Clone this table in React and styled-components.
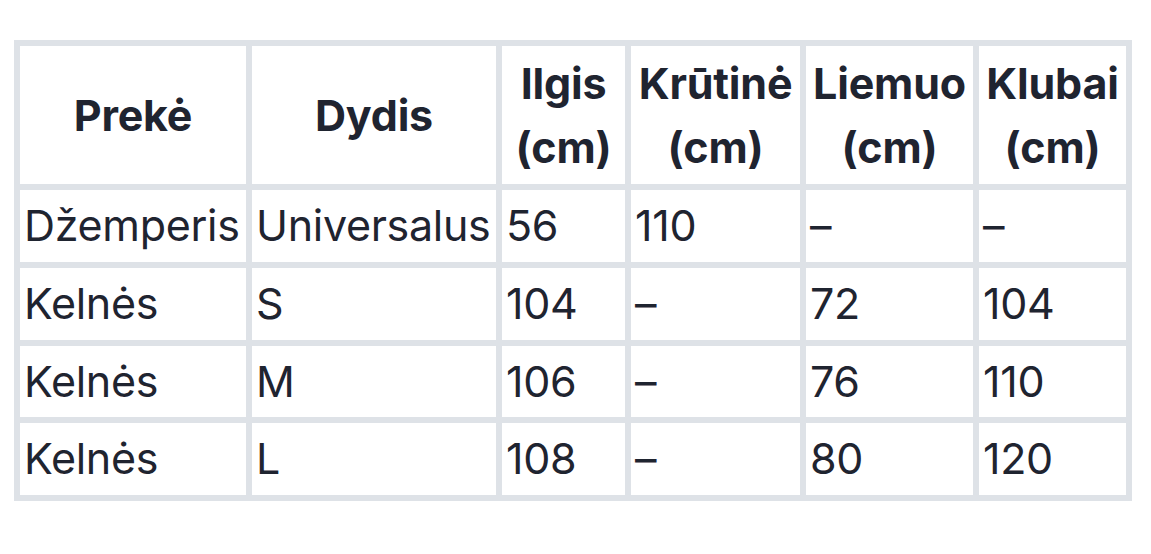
import styled, { createGlobalStyle } from "styled-components"

const GlobalStyle = createGlobalStyle`
  html, body {
    margin: 0;
    padding: 0;
    background: #ffffff;
  }
`

const Page = styled.div`
  padding: 40px 0 0 14px;
  font-family: "Inter", "Liberation Sans", sans-serif;
  color: #1f2430;
`

const Table = styled.table`
  width: 1118px;
  table-layout: fixed;
  border-collapse: collapse;
  border: 6px solid #dee2e7;
`

const HeadCell = styled.th`
  border: 6px solid #dee2e7;
  padding: 4px 4px;
  height: 130px;
  font-size: 43px;
  font-weight: 700;
  line-height: 1.5;
  text-align: center;
  vertical-align: middle;
  letter-spacing: -0.2px;
`

const Cell = styled.td`
  border: 6px solid #dee2e7;
  padding: 4px 4px;
  height: 63.75px;
  font-size: 43px;
  font-weight: 400;
  line-height: 63.75px;
  text-align: left;
  vertical-align: middle;
  white-space: nowrap;
  letter-spacing: -0.3px;
`

const columns = [
  { title: "Prekė", width: 232 },
  { title: "Dydis", width: 250 },
  { title: "Ilgis (cm)", width: 129 },
  { title: "Krūtinė (cm)", width: 175 },
  { title: "Liemuo (cm)", width: 173 },
  { title: "Klubai (cm)", width: 153 },
]

const rows = [
  ["Džemperis", "Universalus", "56", "110", "–", "–"],
  ["Kelnės", "S", "104", "–", "72", "104"],
  ["Kelnės", "M", "106", "–", "76", "110"],
  ["Kelnės", "L", "108", "–", "80", "120"],
]

const App = () => {
  return (
    <Page>
      <GlobalStyle />
      <Table>
        <colgroup>
          {columns.map((c) => (
            <col key={c.title} style={{ width: c.width }} />
          ))}
        </colgroup>
        <thead>
          <tr>
            {columns.map((c) => (
              <HeadCell key={c.title}>{c.title}</HeadCell>
            ))}
          </tr>
        </thead>
        <tbody>
          {rows.map((row, i) => (
            <tr key={i}>
              {row.map((value, j) => (
                <Cell key={j}>{value}</Cell>
              ))}
            </tr>
          ))}
        </tbody>
      </Table>
    </Page>
  )
}

export default App
